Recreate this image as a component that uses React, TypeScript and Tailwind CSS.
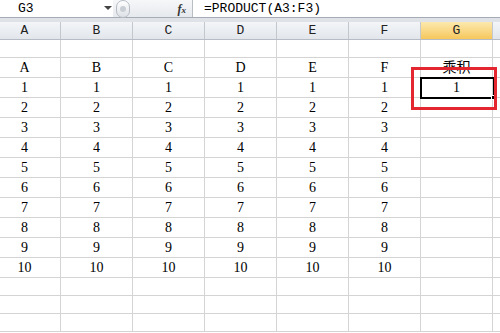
import React from "react";

const cols = ["A", "B", "C", "D", "E", "F", "G", "H"];
const serif = { fontFamily: '"Liberation Serif", "Noto Sans CJK SC", serif' };
const mono = { fontFamily: '"Liberation Mono", monospace' };

function Cell({ children }: { children?: React.ReactNode }) {
	return (
		<div className="w-[72px] shrink-0 border-r border-[#d4d4d4] flex items-end justify-center pb-[2px] text-[14px] text-black leading-none">
			{children}
		</div>
	);
}

function Row({ values, tall }: { values: (string | number)[]; tall?: boolean }) {
	return (
		<div
			className={`flex border-b border-[#d4d4d4] ${tall ? "h-[20px]" : "h-[18px]"}`}
			style={serif}
		>
			{cols.map((c, i) => (
				<Cell key={c}>{values[i]}</Cell>
			))}
		</div>
	);
}

export default function App() {
	const nums = Array.from({ length: 10 }, (_, i) => i + 1);

	return (
		<div className="w-[500px] h-[333px] overflow-hidden bg-white relative">
			{/* formula bar */}
			<div className="flex h-[18px] border-b border-[#a5acb5] bg-white" style={mono}>
				<div className="w-[113px] flex items-center text-[13px] text-black pl-[18px] relative">
					G3
					<span className="absolute left-[104px] top-[6px] w-0 h-0 border-l-[4px] border-r-[4px] border-t-[4px] border-l-transparent border-r-transparent border-t-[#444]" />
				</div>
				<div className="w-[80px] flex items-center bg-gradient-to-b from-[#f6f7f9] to-[#e6e9ed] border-r border-[#b9bec5] relative">
					<div className="ml-[3px] w-[14px] h-[18px] rounded-full border border-[#b7bcc4] bg-gradient-to-b from-white to-[#dde1e6] flex items-center justify-center">
						<div className="w-[6px] h-[6px] rounded-full bg-[#c9ced5]" />
					</div>
					<span
						className="ml-auto mr-[6px] text-[12px] italic font-bold text-[#333]"
						style={{ fontFamily: '"Liberation Serif", serif' }}
					>
						f<span className="text-[9px]">x</span>
					</span>
				</div>
				<div className="flex-1 flex items-center pl-[11px] text-[13px] text-black">
					=PRODUCT(A3:F3)
				</div>
			</div>
			<div className="h-[4px] bg-[#dfe3e8]" />

			{/* grid */}
			<div className="ml-[-11px]">
				<div className="flex h-[18px] border-b border-[#b6bcc6]" style={mono}>
					{cols.map((c) => (
						<div
							key={c}
							className={`w-[72px] shrink-0 border-r border-[#c3c8cf] flex items-center justify-center text-[13px] text-[#222] ${
								c === "G"
									? "bg-gradient-to-b from-[#fce9ad] to-[#f6c75a]"
									: "bg-gradient-to-b from-[#f3f5f8] to-[#e2e6eb]"
							}`}
						>
							{c === "H" ? "" : c}
						</div>
					))}
				</div>
				<Row values={[]} />
				<Row values={["A", "B", "C", "D", "E", "F", "乘积"]} tall />
				{nums.map((n) => (
					<Row key={n} values={[n, n, n, n, n, n, n === 1 ? 1 : ""]} tall />
				))}
				<Row values={[]} />
				<Row values={[]} />
				<Row values={[]} />
			</div>

			{/* selection */}
			<div className="absolute left-[420px] top-[77px] w-[75px] h-[22px] border-2 border-black" />
			<div className="absolute left-[491px] top-[95px] w-[5px] h-[5px] bg-black border border-white" />
			{/* red highlight */}
			<div className="absolute left-[411px] top-[67px] w-[86px] h-[43px] border-[3px] border-[#e3262f]" />
		</div>
	);
}
